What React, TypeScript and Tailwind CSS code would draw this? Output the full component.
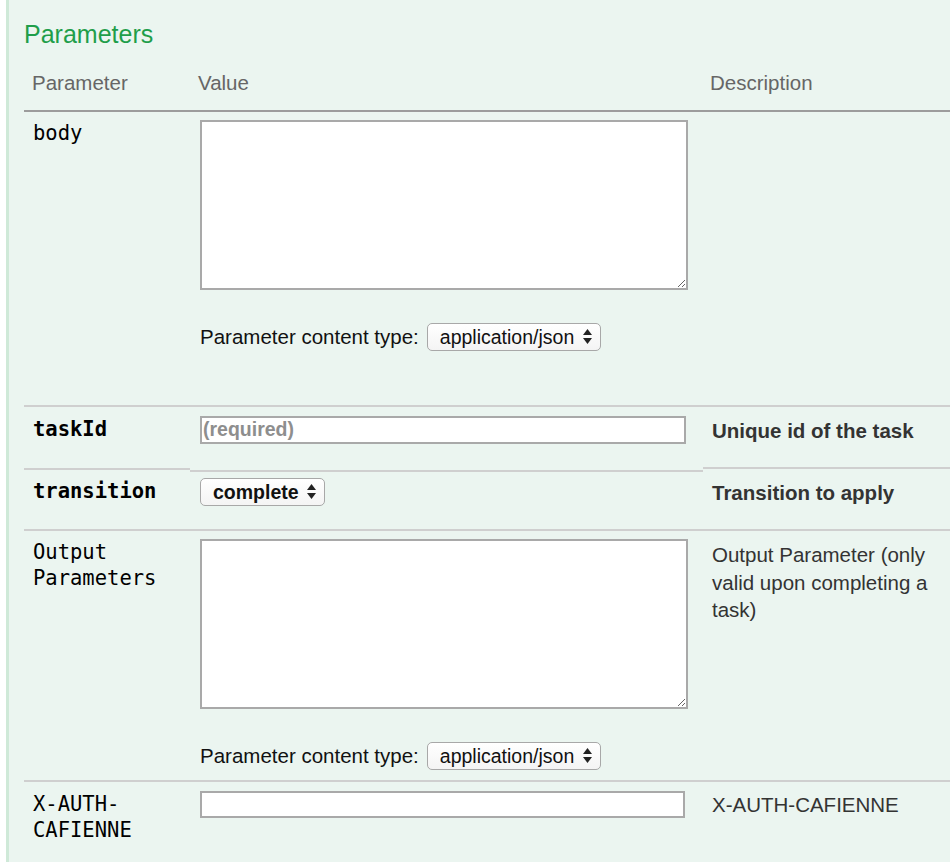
import React from 'react'

const sans = { fontFamily: '"Liberation Sans", Arial, sans-serif' }
const mono = { fontFamily: '"DejaVu Sans Mono", "Liberation Mono", monospace' }

function Select({ value, width, bold }: { value: string; width: string; bold?: boolean }) {
  return (
    <div className={`relative inline-block h-[28px] ${width}`}>
      <select
        defaultValue={value}
        className={`h-full w-full appearance-none rounded-[5px] border border-[#a8a8a8] bg-gradient-to-b from-white to-[#f4f4f4] pl-[12px] pr-[24px] text-[19.5px] leading-[26px] text-[#111] outline-none ${bold ? 'font-bold' : ''}`}
        style={sans}
      >
        <option>{value}</option>
      </select>
      <svg
        className="pointer-events-none absolute right-[9px] top-[6px] h-[15px] w-[9px]"
        viewBox="0 0 9 15"
      >
        <path d="M4.5 0 L9 6 L0 6 Z" fill="#222" />
        <path d="M0 9 L9 9 L4.5 15 Z" fill="#222" />
      </svg>
    </div>
  )
}

function ContentType() {
  return (
    <div className="flex items-center gap-[8px]">
      <span className="text-[20.5px] text-[#111]" style={sans}>
        Parameter content type:
      </span>
      <Select value="application/json" width="w-[174px]" />
    </div>
  )
}

export default function App() {
  return (
    <div className="h-[862px] w-[950px] overflow-hidden bg-white pl-[6px]">
      <div className="h-full border-l-[3px] border-[#cfe9d8] bg-[#ebf5f0] pl-[15px] pt-[20px]">
        {/* Heading */}
        <h4 className="text-[25px] leading-[29px] text-[#1f9e4a]" style={sans}>
          Parameters
        </h4>

        <div className="w-[1000px]">
          {/* Header row */}
          <div
            className="grid grid-cols-[166px_513px_1fr] border-b-2 border-[#9c9c9c] pt-[22px] pb-[15px] text-[20.5px] leading-[24px] text-[#666]"
            style={sans}
          >
            <div className="pl-[8px]">Parameter</div>
            <div className="pl-[8px]">Value</div>
            <div className="pl-[7px]">Description</div>
          </div>

          {/* body */}
          <div className="grid h-[293px] grid-cols-[166px_513px_1fr]">
            <div className="pl-[9px] pt-[8px] text-[20.5px] leading-[26px] text-black" style={mono}>
              body
            </div>
            <div className="pl-[10px] pt-[8px]">
              <textarea className="block h-[170px] w-[488px] border-2 border-[#a9a9a9] bg-white" />
              <div className="mt-[32px]">
                <ContentType />
              </div>
            </div>
            <div />
          </div>

          {/* taskId */}
          <div className="grid h-[63px] grid-cols-[166px_513px_1fr] border-t-2 border-[#cfcfcf]">
            <div className="pl-[9px] pt-[9px] text-[20.5px] font-bold leading-[26px] text-black" style={mono}>
              taskId
            </div>
            <div className="pl-[10px] pt-[9px]">
              <input
                placeholder="(required)"
                className="block h-[28px] w-[486px] border-2 border-[#a9a9a9] bg-white pl-[1px] text-[19.5px] font-bold placeholder:text-[#8e8e8e]"
                style={sans}
              />
            </div>
            <div className="pl-[9px] pt-[11px] text-[20.5px] font-bold leading-[26px] text-[#333]" style={sans}>
              Unique id of the task
            </div>
          </div>

          {/* transition */}
          <div className="grid h-[61px] grid-cols-[166px_513px_1fr]">
            <div className="border-t-2 border-[#cfcfcf] pl-[9px] pt-[8px] text-[20.5px] font-bold leading-[26px] text-black" style={mono}>
              transition
            </div>
            <div className="mt-[2px] border-t-2 border-[#cfcfcf] pl-[10px] pt-[6px]">
              <Select value="complete" width="w-[125px]" bold />
            </div>
            <div className="-mt-[1px] border-t-2 border-[#cfcfcf] pl-[9px] pt-[11px] text-[20.5px] font-bold leading-[26px] text-[#333]" style={sans}>
              Transition to apply
            </div>
          </div>

          {/* Output Parameters */}
          <div className="grid h-[251px] grid-cols-[166px_513px_1fr] border-t-2 border-[#cfcfcf]">
            <div className="pl-[9px] pt-[8px] text-[20.5px] leading-[26px] text-black" style={mono}>
              Output
              <br />
              Parameters
            </div>
            <div className="pl-[10px] pt-[8px]">
              <textarea className="block h-[170px] w-[488px] border-2 border-[#a9a9a9] bg-white" />
              <div className="mt-[32px]">
                <ContentType />
              </div>
            </div>
            <div className="w-[236px] pl-[9px] pt-[10px] text-[20.5px] leading-[27.5px] text-[#333]" style={sans}>
              Output Parameter (only valid upon completing a task)
            </div>
          </div>

          {/* X-AUTH-CAFIENNE */}
          <div className="grid h-[80px] grid-cols-[166px_513px_1fr] border-t-2 border-[#cfcfcf]">
            <div className="w-[140px] pl-[9px] pt-[9px] text-[20.5px] leading-[26px] text-black" style={mono}>
              X-AUTH-
              <br />
              CAFIENNE
            </div>
            <div className="pl-[10px] pt-[9px]">
              <input className="block h-[27px] w-[485px] border-2 border-[#a9a9a9] bg-white" />
            </div>
            <div className="pl-[9px] pt-[10px] text-[20.5px] leading-[26px] text-[#333]" style={sans}>
              X-AUTH-CAFIENNE
            </div>
          </div>
        </div>
      </div>
    </div>
  )
}
